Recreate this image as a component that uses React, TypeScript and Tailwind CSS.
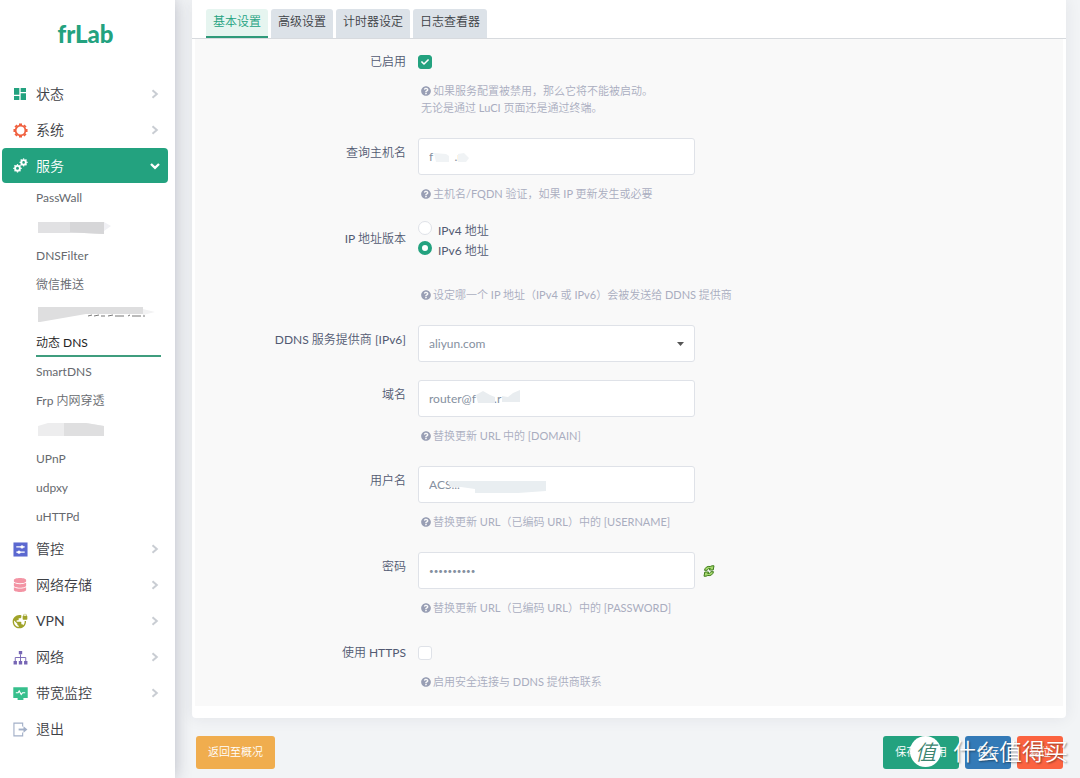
import * as React from 'react';
import clsx from 'clsx';
import { MdDashboard, MdVpnLock } from 'react-icons/md';
import { FaCheck, FaDatabase, FaQuestionCircle } from 'react-icons/fa';

/* ---------- Icons ---------- */

const teeth = [0, 45, 90, 135, 180, 225, 270, 315];

const GearIcon = () => (
  <svg viewBox="0 0 16 16" width={15} height={15} fill="none" stroke="currentColor">
    <circle cx="8" cy="8" r="5.2" strokeWidth="1.9" />
    {teeth.map((deg) => (
      <path key={deg} d="M6.4 1.4h3.2" strokeWidth="1.8" transform={`rotate(${deg} 8 8)`} />
    ))}
  </svg>
);

const Cog = ({ cx, cy, r }: { cx: number; cy: number; r: number }) => (
  <g>
    <circle cx={cx} cy={cy} r={r} strokeWidth="2" />
    {teeth.map((deg) => (
      <path
        key={deg}
        d={`M${cx - 0.7} ${cy - r - 1.2}h1.4`}
        strokeWidth="1.4"
        transform={`rotate(${deg} ${cx} ${cy})`}
      />
    ))}
  </g>
);

const CogsIcon = () => (
  <svg viewBox="0 0 16 16" width={15} height={15} fill="none" stroke="currentColor">
    <Cog cx={4.8} cy={11} r={2.6} />
    <Cog cx={11.3} cy={4.7} r={2.4} />
  </svg>
);

const SlidersIcon = () => (
  <svg viewBox="0 0 16 16" width={15} height={15}>
    <rect x="0.5" y="0.5" width="15" height="15" fill="currentColor" />
    <path d="M3.500 5.200h9M3.500 10.800h9" stroke="#fff" strokeWidth="1.2" />
    <circle cx="9.600" cy="5.200" r="1.700" fill="#fff" />
    <circle cx="6.400" cy="10.800" r="1.700" fill="#fff" />
  </svg>
);

const NetworkIcon = () => (
  <svg viewBox="0 0 16 16" width={15} height={15}>
    <path
      d="M6.2 1h3.6v3.6H6.2zM.6 11.8h3.6v3.6H.6zM6.2 11.8h3.6v3.6H6.2zM11.8 11.8h3.6v3.6h-3.600z"
      fill="currentColor"
    />
    <path d="M8 4.6v7.200M2.400 11.800V8h11.200v3.800" fill="none" stroke="currentColor" strokeWidth="1" />
  </svg>
);

const MonitorIcon = () => (
  <svg viewBox="0 0 16 16" width={15} height={15}>
    <path d="M.3 1.200h15.400v11.600h-4.600v2.200H4.900v-2.200H.3z" fill="currentColor" />
    <path d="M3 7.2h2.400l1.200-2 2.200 3.800 1.400-1.800H13" fill="none" stroke="#fff" strokeWidth="1.2" />
  </svg>
);

const LogoutIcon = () => (
  <svg viewBox="0 0 16 16" width={15} height={15} fill="none" stroke="currentColor">
    <path d="M10.300 4.800V1.200H1v13.600h9.300v-3.600" strokeWidth="1.2" />
    <path d="M6 8h6" strokeWidth="2" />
    <path d="M11.200 4.600L15.400 8l-4.200 3.400z" fill="currentColor" stroke="none" />
  </svg>
);

const ArrowRight = () => (
  <svg viewBox="0 0 8 10" width={8} height={10} fill="none" stroke="currentColor" strokeWidth="2" className="text-[#c9cdd3]">
    <path d="M1.500 1.200L5.800 5 1.500 8.800" />
  </svg>
);

const ArrowDown = () => (
  <svg viewBox="0 0 10 8" width={10} height={8} fill="none" stroke="currentColor" strokeWidth="2.4">
    <path d="M1 2l4 3.800L9 2" />
  </svg>
);

const RefreshIcon = () => (
  <svg viewBox="0 0 12 12" width={12} height={12} fill="#a6d86f" stroke="#3f7d1c" strokeWidth="1">
    <path d="M1.500 5.300C2 2.500 4.300.9 7.200 1.500L9 .8h2L10.200 5H6.300l1-1.500C5.600 3.300 4.600 4 4.200 5.300z" />
    <path d="M10.500 6.700c-.5 2.800-2.800 4.400-5.700 3.800l-1.800.7H1L1.800 7h3.900l-1 1.500c1.700.2 2.700-.5 3.100-1.800z" />
  </svg>
);

/* ---------- Sidebar ---------- */

const mainItems = [
  { label: '状态', icon: <MdDashboard size={18} />, color: 'text-[#23a27f]' },
  { label: '系统', icon: <GearIcon />, color: 'text-[#f0603f]' },
];

const lowerItems = [
  { label: '管控', icon: <SlidersIcon />, color: 'text-[#5b68d0]', arrow: true },
  { label: '网络存储', icon: <FaDatabase size={14} />, color: 'text-[#f394a4]', arrow: true },
  { label: 'VPN', icon: <MdVpnLock size={16} />, color: 'text-[#a0a32a]', arrow: true },
  { label: '网络', icon: <NetworkIcon />, color: 'text-[#7766b5]', arrow: true },
  { label: '带宽监控', icon: <MonitorIcon />, color: 'text-[#36bf8c]', arrow: true },
  { label: '退出', icon: <LogoutIcon />, color: 'text-[#a3b0c8]', arrow: false },
];

const SmearA = () => (
  <svg width="80" height="16" viewBox="0 0 80 16" aria-hidden="true">
    <path d="M68 3l7 4-7 5z" fill="#f0f0f4" />
    <path d="M2 3h66v12l-20-1H2z" fill="#e1e1e3" />
    <path d="M34 3h34v12l-20-1-14-1z" fill="#d6d6d8" />
  </svg>
);

const SmearB = () => (
  <svg width="122" height="18" viewBox="0 0 122 18" aria-hidden="true">
    <path
      d="M52 11l4-1M58 11l5-1M65 11h4M72 11l5-1M79 11h9M92 11l2-1M96 11h9M107 11h2"
      stroke="#777"
      strokeWidth="1"
    />
    <path d="M2 2h105v7H50L4 17H2z" fill="#dededf" />
    <path d="M107 4l12 3-12 3z" fill="#f2f2f3" />
  </svg>
);

const SmearC = () => (
  <svg width="70" height="16" viewBox="0 0 70 16" aria-hidden="true">
    <path d="M2 4l10-3h38l18 3v10H2z" fill="#ededee" />
    <path d="M28 1h22l18 3v10H28z" fill="#dfdfe0" />
  </svg>
);

const subItems: { label: string; node?: React.ReactNode; active?: boolean }[] = [
  { label: 'PassWall' },
  { label: '已隐藏 1', node: <SmearA /> },
  { label: 'DNSFilter' },
  { label: '微信推送' },
  { label: '已隐藏 2', node: <SmearB /> },
  { label: '动态 DNS', active: true },
  { label: 'SmartDNS' },
  { label: 'Frp 内网穿透' },
  { label: '已隐藏 3', node: <SmearC /> },
  { label: 'UPnP' },
  { label: 'udpxy' },
  { label: 'uHTTPd' },
];

interface MenuItemProps {
  label: string;
  icon: React.ReactNode;
  color: string;
  arrow?: boolean;
}

const MenuItem = ({ label, icon, color, arrow = true }: MenuItemProps) => (
  <a href="#" className="flex h-9 items-center pl-3 pr-4 text-sm text-[#3d4045]">
    <span className={clsx('flex w-4 justify-center', color)}>{icon}</span>
    <span className="ml-2 flex-1">{label}</span>
    {arrow && <ArrowRight />}
  </a>
);

const Sidebar = () => (
  <aside className="relative z-10 w-[175px] shrink-0 bg-white shadow-[0_0_16px_rgba(40,40,70,0.28)]">
    <div className="flex h-19 items-center justify-center pr-1 pb-2 text-2xl font-black text-[#23a27f]">frLab</div>
    <nav>
      {mainItems.map((item) => (
        <MenuItem key={item.label} {...item} />
      ))}
      <a
        href="#"
        className="mr-[7px] ml-[2px] flex h-[35px] items-center rounded bg-[#23a27f] pr-2 pl-[10px] text-sm text-white"
      >
        <span className="flex w-4 justify-center">
          <CogsIcon />
        </span>
        <span className="ml-2 flex-1">服务</span>
        <ArrowDown />
      </a>
      <ul className="pl-9 pr-[14px] text-xs">
        {subItems.map(({ label, node, active }) => (
          <li key={label}>
            <a
              href="#"
              aria-label={label}
              className={clsx(
                'flex h-[29px] items-center',
                active ? 'border-b-2 border-[#3f9d7e] pt-[3px] text-[#222]' : 'text-[#66696e]'
              )}
            >
              {node ?? label}
            </a>
          </li>
        ))}
      </ul>
      {lowerItems.map((item) => (
        <MenuItem key={item.label} {...item} />
      ))}
    </nav>
  </aside>
);

/* ---------- Form ---------- */

interface RowProps {
  label: string;
  htmlFor?: string;
  help?: React.ReactNode;
  children: React.ReactNode;
}

const Row = ({ label, htmlFor, help, children }: RowProps) => (
  <div className="flex gap-3">
    <label htmlFor={htmlFor} className="w-[211px] shrink-0 pt-2 text-right text-xs leading-[14px] text-[#525a72]">
      {label}
    </label>
    <div className="min-w-0 flex-1">
      {children}
      {help && (
        <p className="pt-[10px] pb-1 pl-[3px] text-[11px] leading-[17px] text-[#a9adbf]">
          <FaQuestionCircle size={10} className="mr-[2px] mb-[2px] inline text-[#989eb4]" />
          {help}
        </p>
      )}
    </div>
  </div>
);

const inputClass =
  'h-[37px] w-full rounded-[3px] border border-[#dfe2e8] bg-white px-[10px] text-[#8590a0] outline-none';

interface TextFieldProps {
  id: string;
  value: string;
  type?: string;
  smear?: React.ReactNode;
  after?: React.ReactNode;
}

const TextField = ({ id, value, type = 'text', smear, after }: TextFieldProps) => (
  <div className="flex items-center gap-2">
    <div className="relative w-[277px]">
      <input
        id={id}
        type={type}
        defaultValue={value}
        className={clsx(inputClass, type === 'password' ? 'text-[8px]' : 'text-xs')}
      />
      {smear}
    </div>
    {after}
  </div>
);

const CheckField = ({ id, checked = false }: { id: string; checked?: boolean }) => (
  <div className="h-[25px] pt-2">
    <span className="relative block size-[14px]">
      <input
        id={id}
        type="checkbox"
        defaultChecked={checked}
        className="peer block size-[14px] appearance-none rounded-[3px] border border-[#dfe2e8] bg-white checked:border-[#23a27f] checked:bg-[#23a27f]"
      />
      <FaCheck
        size={8}
        className="pointer-events-none absolute top-[3px] left-[3px] hidden text-white peer-checked:block"
      />
    </span>
  </div>
);

const RadioField = ({ label, checked = false }: { label: string; checked?: boolean }) => (
  <label className="flex h-5 gap-[6px] text-xs leading-[22px] text-[#525a72]">
    <input
      type="radio"
      name="ip-version"
      defaultChecked={checked}
      className="mt-[1px] size-[14px] appearance-none rounded-full border border-[#dfe2e8] bg-white checked:border-4 checked:border-[#23a27f]"
    />
    {label}
  </label>
);

const tabs = ['基本设置', '高级设置', '计时器设定', '日志查看器'];

const SettingsForm = () => (
  <form className="mx-[3px] flex flex-col gap-[18px] bg-[#f9f9f9] pt-2 pb-3">
    <Row
      label="已启用"
      htmlFor="enabled"
      help={
        <>
          如果服务配置被禁用，那么它将不能被启动。
          <br />
          无论是通过 LuCI 页面还是通过终端。
        </>
      }
    >
      <CheckField id="enabled" checked />
    </Row>
    <Row label="查询主机名" htmlFor="lookup" help="主机名/FQDN 验证，如果 IP 更新发生或必要">
      <TextField
        id="lookup"
        value="f       .r"
        smear={
          <svg className="absolute top-3 left-4" width="40" height="16" viewBox="0 0 40 16">
            <path d="M0 3l12 1 3 2v6H2z M24 4l6-1 5 5-3 4h-8z" fill="#f0f3f5" />
          </svg>
        }
      />
    </Row>
    <Row label="IP 地址版本" help="设定哪一个 IP 地址（IPv4 或 IPv6）会被发送给 DDNS 提供商">
      <div className="-mt-1 pb-4">
        <RadioField label="IPv4 地址" />
        <RadioField label="IPv6 地址" checked />
      </div>
    </Row>
    <Row label="DDNS 服务提供商 [IPv6]" htmlFor="provider">
      <div className="relative w-[277px]">
        <select id="provider" className={clsx(inputClass, 'block appearance-none text-xs')}>
          <option>aliyun.com</option>
        </select>
        <svg
          className="pointer-events-none absolute top-[17px] right-[11px] text-[#555]"
          width="7"
          height="4"
          viewBox="0 0 7 4"
        >
          <path d="M0 0h7L3.500 4z" fill="currentColor" />
        </svg>
      </div>
    </Row>
    <Row label="域名" htmlFor="domain" help="替换更新 URL 中的 [DOMAIN]">
      <TextField
        id="domain"
        value="router@f      .r"
        smear={
          <svg className="absolute top-2 left-14" width="48" height="18" viewBox="0 0 48 18">
            <path d="M2 7l7-4 7 4 5 2v6H4z M28 8l6 1 5-4 7-3v12H28z" fill="#e9edf0" />
          </svg>
        }
      />
    </Row>
    <Row label="用户名" htmlFor="username" help="替换更新 URL（已编码 URL）中的 [USERNAME]">
      <TextField
        id="username"
        value="ACS..."
        smear={
          <svg className="absolute top-3 left-7" width="104" height="18" viewBox="0 0 104 18">
            <path d="M2 3h98v10l-28 2H29v-4l-14-2H4z" fill="#e9eef1" />
          </svg>
        }
      />
    </Row>
    <Row label="密码" htmlFor="password" help="替换更新 URL（已编码 URL）中的 [PASSWORD]">
      <TextField
        id="password"
        type="password"
        value="0123456789"
        after={
          <button type="button" aria-label="显示密码">
            <RefreshIcon />
          </button>
        }
      />
    </Row>
    <Row label="使用 HTTPS" htmlFor="https" help="启用安全连接与 DDNS 提供商联系">
      <CheckField id="https" />
    </Row>
  </form>
);

const actionClass = 'h-[33px] rounded-[3px] px-3 text-[11px] text-white';

const Watermark = () => (
  <div className="pointer-events-none absolute right-3 bottom-3 z-20 flex items-center gap-3 text-white">
    <span className="flex size-[31px] items-center justify-center rounded-full bg-white text-[21px] leading-none font-medium text-[#3d8571] italic">
      值
    </span>
    <span className="text-[23px] leading-[31px] [text-shadow:1px_1px_2px_rgba(0,0,0,0.45)]">什么值得买</span>
  </div>
);

export default function App() {
  return (
    <div className="relative flex min-h-screen bg-[#f2f4f6] font-['Lato','Noto_Sans_CJK_SC_DemiLight','Noto_Sans_CJK_SC',sans-serif]">
      <Sidebar />
      <main className="min-w-0 flex-1 pr-[14px] pl-[17px]">
        <section className="rounded-b bg-white pt-[9px] pb-3 shadow-[0_0_16px_rgba(40,40,70,0.08)]">
          <div className="flex gap-[3px] border-b border-[#d7dade] pl-[14px]" role="tablist">
            {tabs.map((tab, i) => (
              <button
                key={tab}
                type="button"
                role="tab"
                aria-selected={i === 0}
                className={clsx(
                  'h-[29px] rounded-t-[3px] px-[7px] text-xs',
                  i === 0
                    ? 'border-b-2 border-[#2f9a7a] bg-[#e6f5f0] pb-[2px] text-[#23a27f]'
                    : 'bg-[#dce2e8] pb-1 text-[#3d4045]'
                )}
              >
                {tab}
              </button>
            ))}
          </div>
          <SettingsForm />
        </section>
        <div className="flex gap-[6px] pt-[18px] pr-[3px] pb-[10px] pl-1">
          <button type="button" className={clsx(actionClass, 'mr-auto bg-[#f0ad4e]')}>返回至概况</button>
          <button type="button" className={clsx(actionClass, 'bg-[#23a27f]')}>保存&amp;应用</button>
          <button type="button" className={clsx(actionClass, 'bg-[#337ab7]')}>保存</button>
          <button type="button" className={clsx(actionClass, 'bg-[#fb6340]')}>复位</button>
        </div>
      </main>
      <Watermark />
    </div>
  );
}
